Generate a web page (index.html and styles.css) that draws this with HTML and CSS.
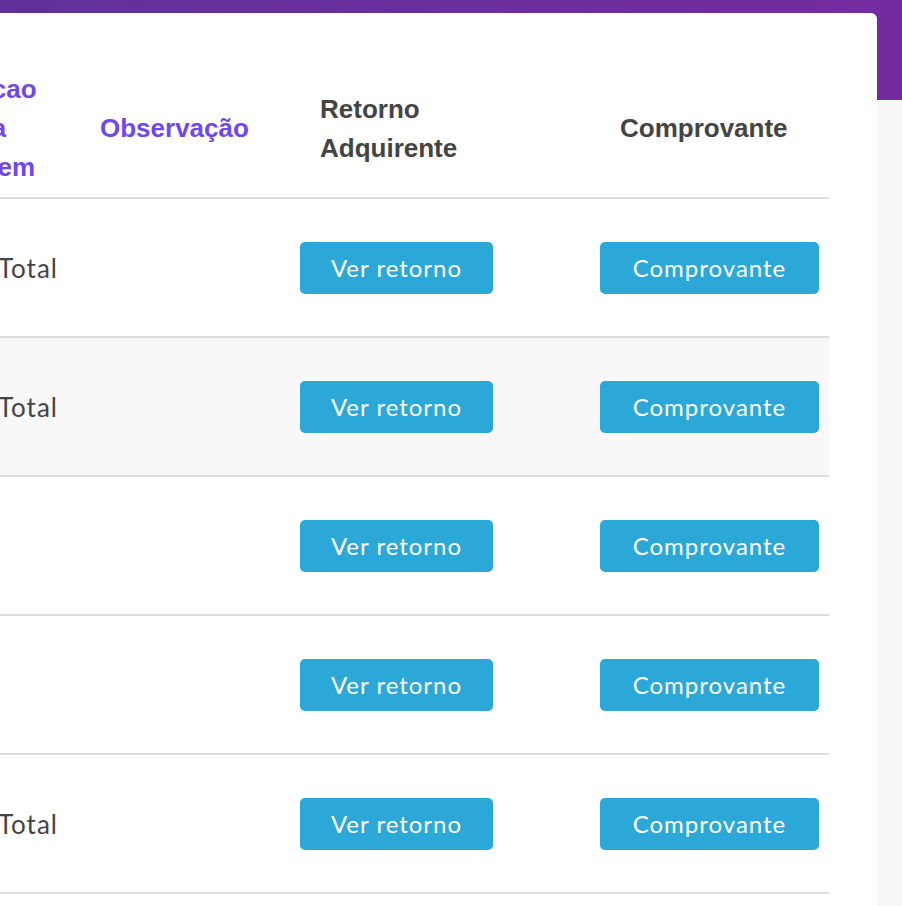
FILE: index.html
```html
<!DOCTYPE html>
<html lang="pt-BR">
<head>
<meta charset="utf-8">
<title>Ordens</title>
<link rel="stylesheet" href="styles.css">
</head>
<body>
  <div class="topbar"></div>
  <main class="card">
    <div class="table">
      <div class="row head">
        <div class="cell th sortable first">Transacao<br>Carteira<br>Contagem</div>
        <div class="cell th sortable">Observação</div>
        <div class="cell th plain">Retorno<br>Adquirente</div>
        <div class="cell th plain">Comprovante</div>
      </div>
      <div class="row">
        <div class="cell td first">Estorno Total</div>
        <div class="cell td"></div>
        <div class="cell td"><button class="btn btn-ret">Ver retorno</button></div>
        <div class="cell td"><button class="btn btn-comp">Comprovante</button></div>
      </div>
      <div class="row striped">
        <div class="cell td first">Estorno Total</div>
        <div class="cell td"></div>
        <div class="cell td"><button class="btn btn-ret">Ver retorno</button></div>
        <div class="cell td"><button class="btn btn-comp">Comprovante</button></div>
      </div>
      <div class="row">
        <div class="cell td first"></div>
        <div class="cell td"></div>
        <div class="cell td"><button class="btn btn-ret">Ver retorno</button></div>
        <div class="cell td"><button class="btn btn-comp">Comprovante</button></div>
      </div>
      <div class="row">
        <div class="cell td first"></div>
        <div class="cell td"></div>
        <div class="cell td"><button class="btn btn-ret">Ver retorno</button></div>
        <div class="cell td"><button class="btn btn-comp">Comprovante</button></div>
      </div>
      <div class="row">
        <div class="cell td first">Estorno Total</div>
        <div class="cell td"></div>
        <div class="cell td"><button class="btn btn-ret">Ver retorno</button></div>
        <div class="cell td"><button class="btn btn-comp">Comprovante</button></div>
      </div>
    </div>
  </main>
</body>
</html>
```

FILE: styles.css
```css
html, body {
  margin: 0;
  padding: 0;
  background: #f8f8f8;
  overflow: hidden;
  height: 906px;
}

.topbar {
  height: 100px;
  background: linear-gradient(90deg, #60319a 0%, #742ba1 100%);
}

.card {
  margin-top: -87px;
  margin-left: -152px;
  width: 1029px;
  box-sizing: border-box;
  background: #ffffff;
  border-radius: 6px;
  padding: 47px 48px 0 20px;
  min-height: 900px;
}

.table {
  display: flex;
  flex-direction: column;
  width: 961px;
}

.row {
  display: grid;
  grid-template-columns: 212px 200px 300px 249px;
  height: 139px;
  box-sizing: border-box;
  border-bottom: 2px solid #dddddd;
}

.row.head {
  height: 139px;
}

.row.striped {
  background: #f8f8f8;
}

.cell {
  display: flex;
  align-items: center;
  box-sizing: border-box;
}

.th {
  font-family: "Liberation Sans", Arial, sans-serif;
  font-weight: 700;
  font-size: 26px;
  line-height: 39px;
  color: #444444;
  padding-left: 40px;
}

.th.sortable {
  color: #6f48eb;
  padding-left: 20px;
}

.th.first {
  padding-left: 40px;
}

.td {
  font-family: Lato, "Noto Sans", sans-serif;
  font-size: 26px;
  letter-spacing: 1px;
  color: #444444;
  padding-left: 20px;
}

.td.first {
  justify-content: flex-end;
  padding-right: 22px;
}

.btn {
  font-family: Lato, "Noto Sans", sans-serif;
  font-size: 24px;
  letter-spacing: 1px;
  color: #ffffff;
  background: #2ca8d8;
  border: none;
  border-radius: 5px;
  height: 52px;
  padding: 0;
  display: inline-flex;
  align-items: center;
  justify-content: center;
}

.btn-ret {
  width: 193px;
}

.btn-comp {
  width: 219px;
}
```
